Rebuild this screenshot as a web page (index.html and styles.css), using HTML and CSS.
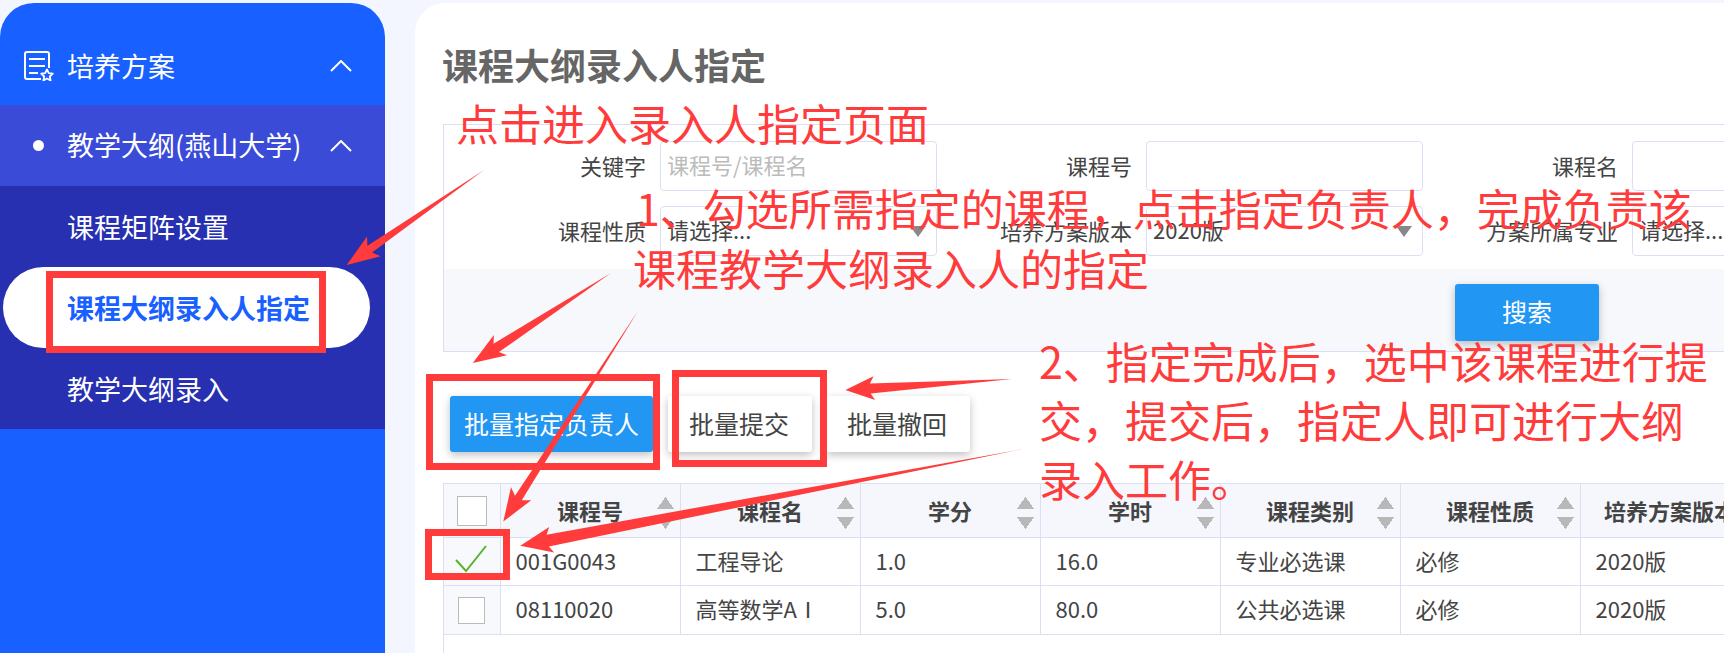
FILE: index.html
```html
<!DOCTYPE html>
<html lang="zh-CN">
<head>
  <meta charset="UTF-8">
  <title>课程大纲录入人指定</title>
  <link rel="stylesheet" href="styles.css">
</head>
<body>
  <aside class="sidebar">
    <div class="menu-top">
      <svg class="menu-icon" width="30" height="30" viewBox="0 0 30 30" fill="none" stroke="#fff" stroke-width="2">
        <path d="M17 28H3a2 2 0 0 1-2-2V3a2 2 0 0 1 2-2h20a2 2 0 0 1 2 2v14"/>
        <path d="M5 8h16M5 15h16M5 22h9"/>
        <path d="M23 18.500l1.800 3.700 4 .5-3 2.800.8 4-3.600-2-3.600 2 .8-4-3-2.800 4-.5z" stroke-width="1.800" stroke-linejoin="round"/>
      </svg>
      <span class="menu-label">培养方案</span>
      <svg class="chevron" width="22" height="12" viewBox="0 0 22 12" fill="none" stroke="#fff" stroke-width="2"><path d="M1 11 11 1l10 10"/></svg>
    </div>
    <div class="menu-sub">
      <span class="dot"></span>
      <span class="menu-label">教学大纲(燕山大学)</span>
      <svg class="chevron" width="22" height="12" viewBox="0 0 22 12" fill="none" stroke="#fff" stroke-width="2"><path d="M1 11 11 1l10 10"/></svg>
    </div>
    <ul class="submenu">
      <li>课程矩阵设置</li>
      <li class="active">课程大纲录入人指定</li>
      <li>教学大纲录入</li>
    </ul>
  </aside>

  <main class="main">
    <div class="content">
      <h1 class="page-title">课程大纲录入人指定</h1>

      <section class="search-panel">
        <div class="search-fields">
          <div class="field"><label>关键字</label><div class="input placeholder">课程号/课程名</div></div>
          <div class="field"><label>课程号</label><div class="input"></div></div>
          <div class="field"><label>课程名</label><div class="input"></div></div>
          <div class="field"><label>课程性质</label><div class="input select">请选择...</div></div>
          <div class="field"><label>培养方案版本</label><div class="input select">2020版</div></div>
          <div class="field"><label>方案所属专业</label><div class="input select">请选择...</div></div>
        </div>
        <div class="search-actions">
          <button class="btn btn-primary btn-search">搜索</button>
        </div>
      </section>

      <div class="toolbar">
        <button class="btn btn-primary btn-assign">批量指定负责人</button>
        <button class="btn btn-submit">批量提交</button>
        <button class="btn btn-revoke">批量撤回</button>
      </div>

      <div class="table-wrap">
        <table class="course-table">
          <thead>
            <tr>
              <th class="check-cell"><span class="checkbox checkbox-head"></span></th>
              <th>课程号<span class="sort"></span></th>
              <th>课程名<span class="sort"></span></th>
              <th>学分<span class="sort"></span></th>
              <th>学时<span class="sort"></span></th>
              <th>课程类别<span class="sort"></span></th>
              <th>课程性质<span class="sort"></span></th>
              <th>培养方案版本</th>
            </tr>
          </thead>
          <tbody>
            <tr class="row-first">
              <td class="check-cell">
                <svg class="tick" width="32" height="28" viewBox="0 0 32 28" fill="none" stroke="#52b52a" stroke-width="2"><path d="M1 15l10 11L31 1"/></svg>
              </td>
              <td>001G0043</td>
              <td>工程导论</td>
              <td>1.0</td>
              <td>16.0</td>
              <td>专业必选课</td>
              <td>必修</td>
              <td>2020版</td>
            </tr>
            <tr>
              <td class="check-cell"><span class="checkbox"></span></td>
              <td>08110020</td>
              <td>高等数学AⅠ</td>
              <td>5.0</td>
              <td>80.0</td>
              <td>公共必选课</td>
              <td>必修</td>
              <td>2020版</td>
            </tr>
          </tbody>
        </table>
      </div>
    </div>
  </main>

  <!-- 标注层 -->
  <div class="mark-box mark-menu"></div>
  <div class="mark-box mark-assign"></div>
  <div class="mark-box mark-submit"></div>
  <div class="mark-box mark-check"></div>

  <p class="note note-one">点击进入录入人指定页面</p>
  <p class="note note-two">1、勾选所需指定的课程，点击指定负责人，完成负责该<br>课程教学大纲录入人的指定</p>
  <p class="note note-three">2、指定完成后，选中该课程进行提<br>交，提交后，指定人即可进行大纲<br>录入工作。</p>

  <svg class="arrows" width="1724" height="653" fill="#ff3b3b">
    <polygon transform="translate(484 170) rotate(145.3)" points="0,0 139,-4 134,-12 167,0 134,12 139,4"/>
    <polygon transform="translate(611 273) rotate(146.9)" points="0,0 137,-5 132,-12 165,0 132,12 137,5"/>
    <polygon transform="translate(638 311) rotate(122.6)" points="0,0 222,-4 217,-12 250,0 217,12 222,4"/>
    <polygon transform="translate(1012 379) rotate(176.2)" points="0,0 142,-5 138,-12 167,0 138,12 142,5"/>
    <polygon transform="translate(1023 449) rotate(169.1)" points="0,0 484,-6 480,-13 512,0 480,13 484,6"/>
  </svg>
</body>
</html>
```

FILE: styles.css
```css
* {
  box-sizing: border-box;
}

html, body {
  height: 653px;
  overflow: hidden;
}

body {
  margin: 0;
  display: flex;
  position: relative;
  background: #f3f6fe;
  font-family: "Noto Sans CJK SC", "Noto Sans", sans-serif;
  color: #444;
}

/* 左侧菜单 */
.sidebar {
  flex: 0 0 385px;
  margin-top: 3px;
  padding-top: 24px;
  background: #1860ff;
  border-radius: 34px 34px 0 0;
  color: #fff;
  font-size: 27px;
  overflow: hidden;
}

.menu-top, .menu-sub {
  display: flex;
  align-items: center;
  padding-right: 33px;
}

.menu-top {
  height: 78px;
  padding-left: 24px;
}

.menu-icon {
  margin-right: 13px;
}

.menu-sub {
  height: 81px;
  padding-left: 33px;
  background: #3a4bd8;
}

.dot {
  width: 11px;
  height: 11px;
  margin-right: 23px;
  border-radius: 50%;
  background: #fff;
}

.menu-label {
  flex: 1;
  padding-bottom: 2px;
  white-space: nowrap;
}

.submenu {
  list-style: none;
  margin: 0;
  padding: 0;
  background: #2630b0;
}

.submenu li {
  height: 81px;
  line-height: 81px;
  padding-left: 67px;
}

.submenu .active {
  width: 367px;
  margin-left: 3px;
  padding-left: 64px;
  background: #fff;
  border-radius: 41px;
  color: #1860ff;
  font-weight: 700;
}

/* 右侧内容 */
.main {
  flex: 1;
  min-width: 0;
  margin: 3px 0 0 30px;
  padding: 38px 0 0 28px;
  background: #fff;
  border-radius: 30px 0 0 0;
  overflow: hidden;
}

.content {
  width: 2168px;
}

.page-title {
  margin: -2px 0 35px -1px;
  font-size: 36px;
  line-height: 50px;
  font-weight: 700;
  color: #666;
}

.search-panel {
  border: 1px solid #dcdff3;
}

.search-fields {
  display: grid;
  grid-template-columns: repeat(3, 486px);
  gap: 15px 0;
  padding: 16px 8px 13px;
}

.field {
  display: flex;
  align-items: center;
  font-size: 22px;
}

.field label {
  width: 194px;
  margin-right: 14px;
  padding-bottom: 2px;
  text-align: right;
  white-space: nowrap;
}

.input {
  position: relative;
  width: 277px;
  height: 50px;
  padding-left: 6px;
  line-height: 44px;
  border: 1px solid #dcdff3;
  border-radius: 4px;
  background: #fff;
}

.placeholder {
  color: #bbb;
}

.select::after {
  content: "";
  position: absolute;
  right: 10px;
  top: 19px;
  border: 8px solid transparent;
  border-top: 11px solid #888;
  border-bottom: 0;
}

.search-actions {
  display: flex;
  justify-content: center;
  align-items: center;
  height: 82px;
  padding-top: 4px;
  background: #f7f8fc;
}

.btn {
  height: 56px;
  padding: 0 21px 2px;
  border: none;
  border-radius: 3px;
  background: #fff;
  color: #444;
  font-family: inherit;
  font-size: 25px;
  box-shadow: 0 3px 8px rgba(0, 0, 0, 0.25);
}

.btn-primary {
  background: #2196f3;
  color: #fff;
}

.btn-search {
  width: 144px;
  height: 57px;
  font-size: 25px;
}

.toolbar {
  display: flex;
  gap: 14px;
  margin: 44px 0 31px 7px;
}

.btn-assign {
  padding: 0 14px 2px;
  margin-right: 1px;
}

.btn-submit {
  padding-right: 23px;
}

.btn-revoke {
  padding-right: 23px;
}

.table-wrap {
  height: 170px;
  border-left: 1px solid #dcdff3;
}

.course-table {
  width: 1316px;
  table-layout: fixed;
  border-collapse: collapse;
  font-size: 22px;
}

.course-table th, .course-table td {
  position: relative;
  border: 1px solid #dcdff3;
  white-space: nowrap;
}

.course-table th:first-child, .course-table td:first-child {
  width: 56px;
  border-left: 0;
}

.course-table th {
  width: 180px;
  height: 54px;
  padding-bottom: 3px;
  background: #f5f7fc;
  color: #444;
  font-weight: 700;
}

.course-table td {
  height: 49px;
  padding: 0 15px 4px;
}

.row-first td {
  height: 48px;
}

.course-table .check-cell {
  padding: 0;
  background: #f8f9fd;
  text-align: center;
}

.checkbox {
  display: block;
  width: 27px;
  height: 27px;
  margin: 0 auto;
  border: 1px solid #bbb;
  background: #fff;
}

.checkbox-head {
  width: 30px;
  height: 30px;
}

.tick {
  display: block;
  margin: -6px auto 0;
  transform: translateX(-1px);
}

.sort {
  position: absolute;
  right: 6px;
  top: 12px;
  width: 17px;
  height: 34px;
  background:
    linear-gradient(to bottom right, transparent 50%, #b8b8b8 50%) left top / 9px 13px no-repeat,
    linear-gradient(to bottom left, transparent 50%, #b8b8b8 50%) right top / 9px 13px no-repeat,
    linear-gradient(to top right, transparent 50%, #b8b8b8 50%) left bottom / 9px 13px no-repeat,
    linear-gradient(to top left, transparent 50%, #b8b8b8 50%) right bottom / 9px 13px no-repeat;
}

/* 红色标注 */
.mark-box {
  position: absolute;
  border: 7px solid #ff3b3b;
}

.mark-menu {
  left: 46px;
  top: 271px;
  width: 280px;
  height: 82px;
}

.mark-assign {
  left: 426px;
  top: 374px;
  width: 234px;
  height: 96px;
}

.mark-submit {
  left: 672px;
  top: 370px;
  width: 155px;
  height: 97px;
}

.mark-check {
  left: 425px;
  top: 529px;
  width: 85px;
  height: 51px;
}

.note {
  position: absolute;
  margin: 0;
  color: #ff3b3b;
  font-size: 43px;
  white-space: nowrap;
}

.note-one {
  left: 456px;
  top: 91px;
  line-height: 62px;
}

.note-two {
  left: 633px;
  top: 177px;
  line-height: 60px;
  text-indent: 3px;
}

.note-three {
  left: 1039px;
  top: 331px;
  line-height: 59px;
}

.arrows {
  position: absolute;
  left: 0;
  top: 0;
}
```
